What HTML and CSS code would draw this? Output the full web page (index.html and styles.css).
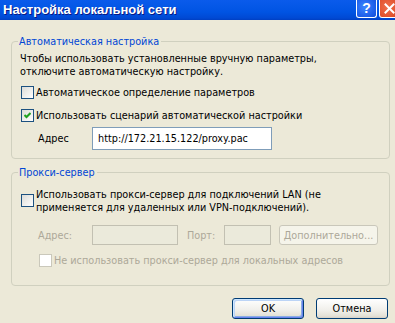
FILE: index.html
```html
<!DOCTYPE html>
<html lang="ru">
<head>
  <meta charset="UTF-8" />
  <title>Настройка локальной сети</title>
  <link rel="stylesheet" href="styles.css">
</head>
<body>

  <div class="window">
    <div class="titlebar">
      <span class="title">Настройка локальной сети</span>
      <span class="tb-btn help">?</span>
      <span class="tb-btn close">
        <svg width="11" height="11" viewBox="0 0 11 11"><path d="M1.5 1.5 L9.5 9.5 M9.5 1.5 L1.5 9.5" stroke="#fff" stroke-width="2" stroke-linecap="square"/></svg>
      </span>
    </div>

    <div class="content">
      <fieldset class="group auto">
        <legend>Автоматическая настройка</legend>
        <p class="note">Чтобы использовать установленные вручную параметры,<br>отключите автоматическую настройку.</p>
        <div class="check first"><span class="box"></span>Автоматическое определение параметров</div>
        <div class="check second">
          <span class="box"><svg width="7" height="7" viewBox="0 0 7 7"><path d="M0.5 3 L2.5 5 L6.5 1" stroke="#21a121" stroke-width="2" fill="none"/></svg></span>Использовать сценарий автоматической настройки
        </div>
        <div class="field-row url-row">
          <span class="field-label">Адрес</span>
          <span class="input url">http://172.21.15.122/proxy.pac</span>
        </div>
      </fieldset>

      <fieldset class="group proxy">
        <legend>Прокси-сервер</legend>
        <div class="check multi"><span class="box"></span><span>Использовать прокси-сервер для подключений LAN (не<br>применяется для удаленных или VPN-подключений).</span></div>
        <div class="field-row disabled">
          <span class="field-label">Адрес:</span>
          <span class="input addr"></span>
          <span class="port-label">Порт:</span>
          <span class="input port"></span>
          <span class="button small off">Дополнительно...</span>
        </div>
        <div class="check disabled bypass"><span class="box"></span>Не использовать прокси-сервер для локальных адресов</div>
      </fieldset>

      <div class="actions">
        <span class="button default">OK</span>
        <span class="button">Отмена</span>
      </div>
    </div>
  </div>

</body>
</html>
```

FILE: styles.css
```css
html, body {
  margin: 0;
  overflow: hidden;
}

body {
  width: 395px;
  height: 323px;
  background: #ece9d8;
  color: #000;
  font-family: "DejaVu Sans", Verdana, sans-serif;
  font-size: 9.7px;
  line-height: 13px;
}

.window {
  width: 400px;
}

.titlebar {
  height: 20px;
  display: flex;
  align-items: flex-start;
  padding-left: 3px;
  background: linear-gradient(#0a5beb, #0054e3 60%, #0049d4 90%, #003fc2);
}

.title {
  flex: 1;
  color: #fff;
  font-family: "Liberation Sans", Arial, sans-serif;
  font-weight: bold;
  font-size: 13px;
  line-height: 20px;
  text-shadow: 1px 1px #0a1883;
}

.tb-btn {
  box-sizing: border-box;
  width: 21px;
  height: 18px;
  border: 1px solid #fff;
  border-top: none;
  border-radius: 0 0 3px 3px;
  display: flex;
  align-items: center;
  justify-content: center;
}

.help {
  margin-right: 2px;
  background: radial-gradient(circle at 40% 40%, #3c86ff, #1c5ce8 70%, #1450d6);
  color: #fff;
  font-family: "Liberation Sans", Arial, sans-serif;
  font-weight: bold;
  font-size: 14px;
}

.close {
  background: radial-gradient(circle at 40% 40%, #f0704d, #e0502d 70%, #c7391a);
}

.content {
  padding: 15px 10px 0 11px;
}

.group {
  margin: 0;
  padding: 4px 8px 8px 8px;
  border: 1px solid #d0d0bf;
  border-radius: 4px;
  min-width: 0;
}

.group legend {
  padding: 0 2px 0 1px;
  margin-left: -2px;
  color: #0046d5;
}

.note {
  margin: 0;
}

.check {
  display: flex;
  align-items: center;
  white-space: nowrap;
}

.box {
  box-sizing: border-box;
  width: 13px;
  height: 13px;
  margin: 0 2px 0 1px;
  border: 1px solid #1c5180;
  background: linear-gradient(135deg, #dcdcd7, #fff);
  display: flex;
  align-items: center;
  justify-content: center;
  flex: none;
}

.check.first {
  margin-top: 8px;
}

.check.second {
  margin-top: 10px;
}

.field-row {
  display: flex;
  align-items: center;
}

.url-row {
  margin-top: 5px;
}

.field-label {
  width: 54px;
  margin-left: 18px;
}

.input {
  box-sizing: border-box;
  height: 23px;
  border: 1px solid #7f9db9;
  background: #fff;
  padding: 0 5px;
  line-height: 21px;
}

.url {
  width: 180px;
}

.proxy {
  margin-top: 7px;
  padding-bottom: 18px;
}

.check.multi {
  margin-top: 5px;
}

.check.multi .box {
  margin-top: -2px;
}

.disabled {
  color: #aca899;
}

.disabled .input {
  height: 20px;
  border-color: #c2c0b2;
  background: #ebeadb;
}

.field-row.disabled {
  margin-top: 11px;
}

.addr {
  width: 86px;
}

.port-label {
  margin-left: 9px;
  width: 37px;
}

.port {
  width: 47px;
}

.check.bypass {
  margin-top: 9px;
  margin-left: 18px;
}

.check.disabled .box {
  border-color: #cac8bb;
  background: #fff;
}

.button {
  box-sizing: border-box;
  height: 21px;
  width: 72px;
  border: 1px solid #003c74;
  border-radius: 3px;
  background: linear-gradient(#fff, #f0efea 60%, #e3e0d6 90%, #d6d0c5);
  display: flex;
  align-items: center;
  justify-content: center;
}

.button.small {
  width: 99px;
  height: 20px;
  margin-left: 8px;
}

.button.off {
  border-color: #c9c7ba;
  background: #f5f4ea;
  color: #aca899;
}

.button.default {
  box-shadow: inset 1px 1px 0 #cee7ff, inset -1px -1px 0 #6982ee, inset 2px 2px 0 #bcd4f6, inset -2px -2px 0 #89ade4;
}

.actions {
  display: flex;
  justify-content: flex-end;
  gap: 12px;
  margin-top: 12px;
  padding-right: 2px;
}
```
